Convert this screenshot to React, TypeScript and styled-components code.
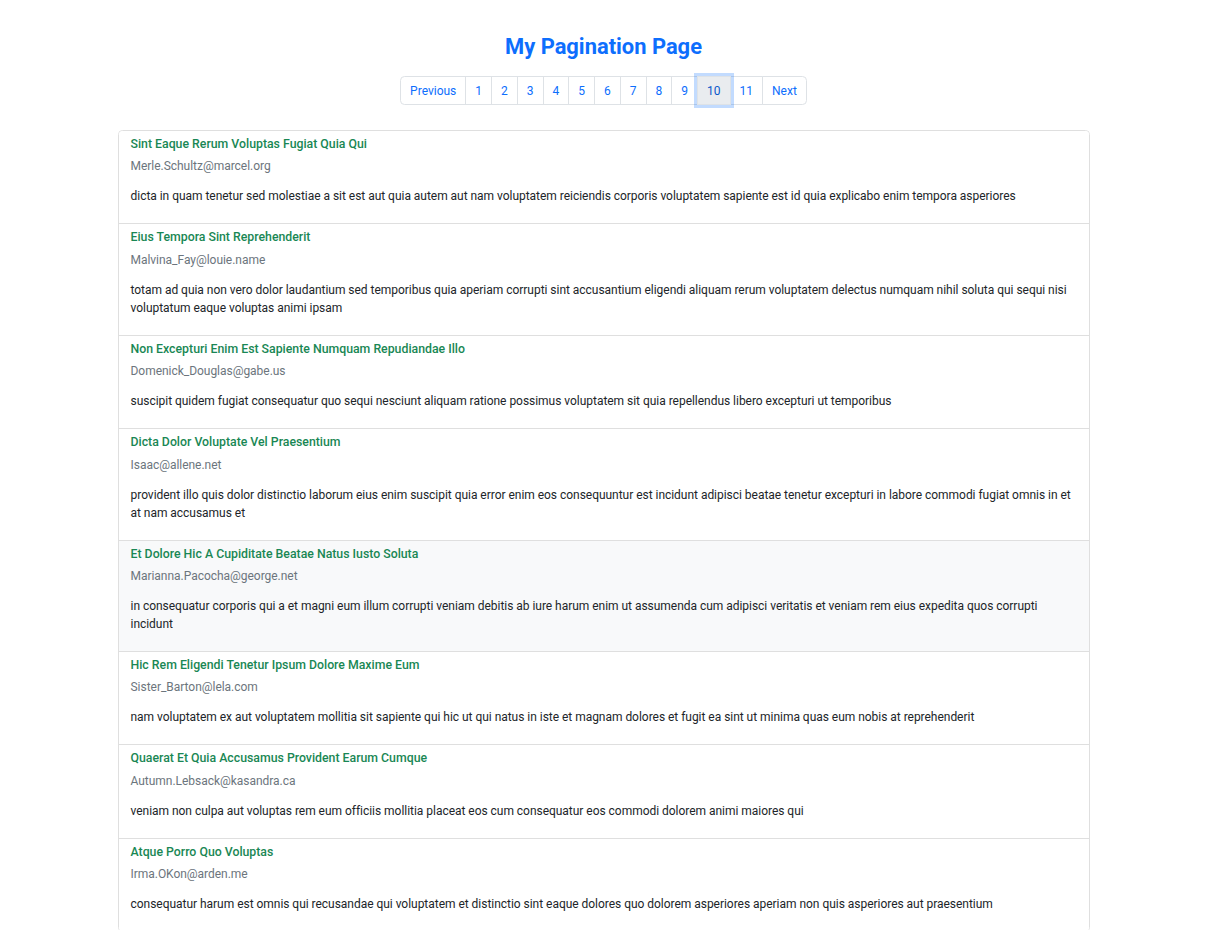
import React from "react";
import styled, { createGlobalStyle } from "styled-components";

const GlobalStyle = createGlobalStyle`
  *, *::before, *::after { box-sizing: border-box; }
  body {
    margin: 0;
    background: #ffffff;
    font-family: "Segoe UI", Roboto, "Liberation Sans", sans-serif;
    font-size: 12px;
    letter-spacing: -0.03px;
    line-height: 18px;
    color: #212529;
  }
`;

const Container = styled.main`
  max-width: 990px;
  margin: 0 auto;
  padding: 34px 9px 0;
`;

const Heading = styled.h3`
  margin: 0 0 17px;
  text-align: center;
  font-size: 21.9px;
  line-height: 25px;
  font-weight: 700;
  letter-spacing: 0;
  color: #0d6efd;
`;

const Nav = styled.nav`
  display: flex;
  justify-content: center;
  margin-bottom: 25px;
`;

const Pages = styled.ul`
  display: flex;
  margin: 0;
  padding: 0;
  list-style: none;
`;

const PageItem = styled.li`
  display: flex;
  margin-left: -1px;
  &:first-child { margin-left: 0; }
  &:first-child > a { border-radius: 4.5px 0 0 4.5px; }
  &:last-child > a { border-radius: 0 4.5px 4.5px 0; }
`;

const PageLink = styled.a<{ $focused?: boolean }>`
  display: block;
  position: relative;
  padding: 4.5px 9px;
  font-size: 12px;
  line-height: 18px;
  letter-spacing: 0;
  text-decoration: none;
  color: ${(p) => (p.$focused ? "#0a58ca" : "#0d6efd")};
  background: ${(p) => (p.$focused ? "#e9ecef" : "#ffffff")};
  border: 1px solid #dee2e6;
  z-index: ${(p) => (p.$focused ? 3 : "auto")};
  box-shadow: ${(p) => (p.$focused ? "0 0 0 3px rgba(13, 110, 253, 0.25)" : "none")};
  cursor: pointer;
`;

const List = styled.ul`
  margin: 0;
  padding: 0;
  list-style: none;
  border: 1px solid #dfdfdf;
  border-radius: 4.5px;
  overflow: hidden;
`;

const Item = styled.li<{ $hover?: boolean }>`
  padding: 6px 12px;
  background: ${(p) => (p.$hover ? "#f8f9fa" : "#ffffff")};
  & + & { border-top: 1px solid #dfdfdf; }
`;

const Title = styled.h6`
  margin: 0 0 6px;
  font-size: 12.3px;
  line-height: 14.4px;
  font-weight: 500;
  letter-spacing: 0;
  color: #198754;
`;

const Email = styled.p`
  margin: 0 0 12px;
  color: #6c757d;
`;

const Body = styled.p`
  margin: 0 0 12px;
`;

type Comment = { name: string; email: string; body: string };

const comments: Comment[] = [
  {
    name: "Sint Eaque Rerum Voluptas Fugiat Quia Qui",
    email: "Merle.Schultz@marcel.org",
    body: "dicta in quam tenetur sed molestiae a sit est aut quia autem aut nam voluptatem reiciendis corporis voluptatem sapiente est id quia explicabo enim tempora asperiores",
  },
  {
    name: "Eius Tempora Sint Reprehenderit",
    email: "Malvina_Fay@louie.name",
    body: "totam ad quia non vero dolor laudantium sed temporibus quia aperiam corrupti sint accusantium eligendi aliquam rerum voluptatem delectus numquam nihil soluta qui sequi nisi voluptatum eaque voluptas animi ipsam",
  },
  {
    name: "Non Excepturi Enim Est Sapiente Numquam Repudiandae Illo",
    email: "Domenick_Douglas@gabe.us",
    body: "suscipit quidem fugiat consequatur quo sequi nesciunt aliquam ratione possimus voluptatem sit quia repellendus libero excepturi ut temporibus",
  },
  {
    name: "Dicta Dolor Voluptate Vel Praesentium",
    email: "Isaac@allene.net",
    body: "provident illo quis dolor distinctio laborum eius enim suscipit quia error enim eos consequuntur est incidunt adipisci beatae tenetur excepturi in labore commodi fugiat omnis in et at nam accusamus et",
  },
  {
    name: "Et Dolore Hic A Cupiditate Beatae Natus Iusto Soluta",
    email: "Marianna.Pacocha@george.net",
    body: "in consequatur corporis qui a et magni eum illum corrupti veniam debitis ab iure harum enim ut assumenda cum adipisci veritatis et veniam rem eius expedita quos corrupti incidunt",
  },
  {
    name: "Hic Rem Eligendi Tenetur Ipsum Dolore Maxime Eum",
    email: "Sister_Barton@lela.com",
    body: "nam voluptatem ex aut voluptatem mollitia sit sapiente qui hic ut qui natus in iste et magnam dolores et fugit ea sint ut minima quas eum nobis at reprehenderit",
  },
  {
    name: "Quaerat Et Quia Accusamus Provident Earum Cumque",
    email: "Autumn.Lebsack@kasandra.ca",
    body: "veniam non culpa aut voluptas rem eum officiis mollitia placeat eos cum consequatur eos commodi dolorem animi maiores qui",
  },
  {
    name: "Atque Porro Quo Voluptas",
    email: "Irma.OKon@arden.me",
    body: "consequatur harum est omnis qui recusandae qui voluptatem et distinctio sint eaque dolores quo dolorem asperiores aperiam non quis asperiores aut praesentium",
  },
];

const pageLabels = ["Previous", "1", "2", "3", "4", "5", "6", "7", "8", "9", "10", "11", "Next"];

export default function App() {
  return (
    <>
      <GlobalStyle />
      <Container>
        <Heading>My Pagination Page</Heading>
        <Nav>
          <Pages>
            {pageLabels.map((label) => (
              <PageItem key={label}>
                <PageLink $focused={label === "10"}>{label}</PageLink>
              </PageItem>
            ))}
          </Pages>
        </Nav>
        <List>
          {comments.map((c, i) => (
            <Item key={c.email} $hover={i === 4}>
              <Title>{c.name}</Title>
              <Email>{c.email}</Email>
              <Body>{c.body}</Body>
            </Item>
          ))}
        </List>
      </Container>
    </>
  );
}
